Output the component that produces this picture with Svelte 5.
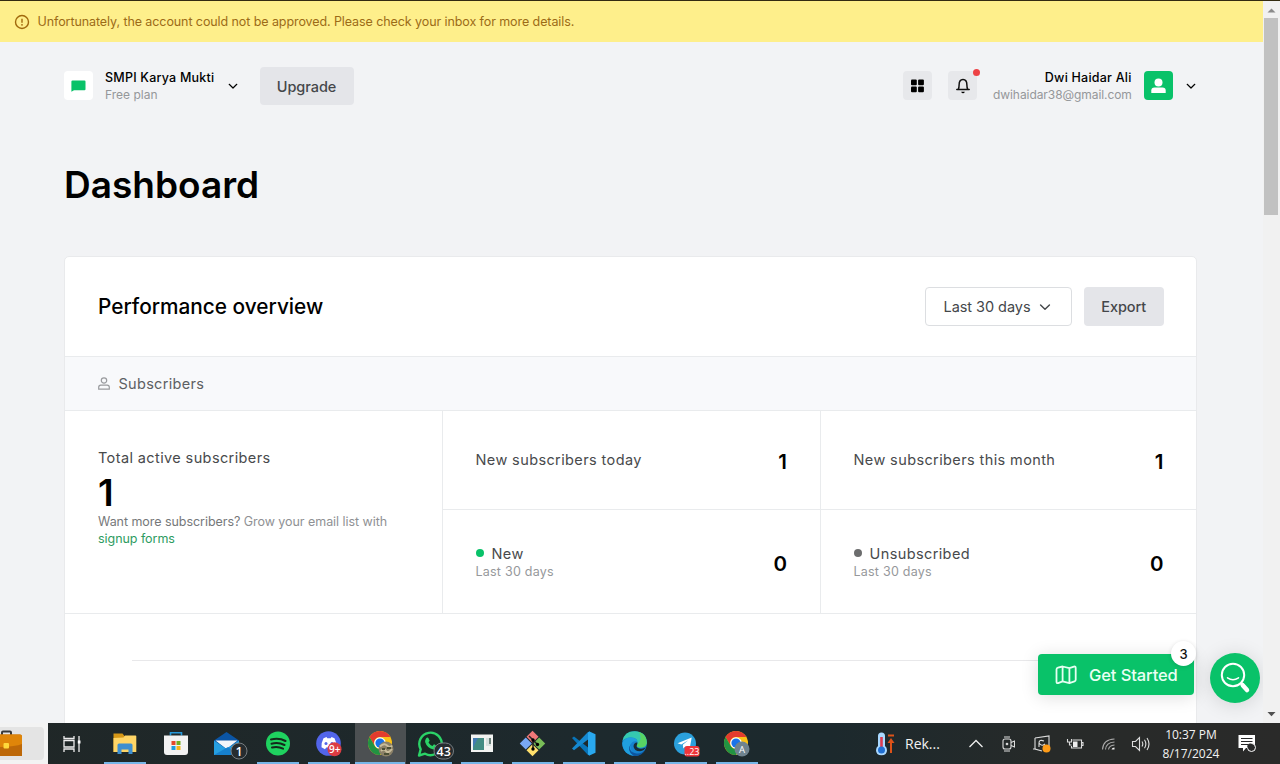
<script>
  const stats = [
    { label: 'New subscribers today', value: 1 },
    { label: 'New subscribers this month', value: 1 },
    { label: 'New', value: 0, dot: 'green', period: 'Last 30 days' },
    { label: 'Unsubscribed', value: 0, dot: 'grey', period: 'Last 30 days' }
  ];
  const apps = [
    { id: 'explorer', open: true },
    { id: 'store' },
    { id: 'mail' },
    { id: 'spotify', open: true },
    { id: 'discord', open: true },
    { id: 'chrome', open: true, active: true },
    { id: 'whatsapp', open: true },
    { id: 'window', open: true },
    { id: 'git', open: true },
    { id: 'vscode', open: true },
    { id: 'edge', open: true },
    { id: 'telegram', open: true },
    { id: 'chrome2', open: true }
  ];
</script>

{#snippet chevron(w)}
  <svg class="chev" width={w} height={w} viewBox="0 0 12 12"><path d="M2.200 4.300l3.800 3.700 3.800-3.700" fill="none" stroke="currentColor" stroke-width="1.200" stroke-linecap="round" stroke-linejoin="round" /></svg>
{/snippet}

{#snippet chromeLogo()}
  <circle cx="20" cy="20" r="12" fill="#fbc116" />
  <path d="M9.600 14A12 12 0 0 1 30.400 14H20a6 6 0 0 0-5.200 9Z" fill="#e33b2e" />
  <path d="M9.600 14A12 12 0 0 0 20 32l5.200-9a6 6 0 0 1-10.400 0Z" fill="#229342" />
  <circle cx="20" cy="20" r="5.800" fill="#fff" />
  <circle cx="20" cy="20" r="4.600" fill="#1a73e8" />
{/snippet}

<div class="screen">
  <div class="viewport">
    <main>
      <div class="banner">
        <svg width="16" height="16" viewBox="0 0 16 16"><circle cx="8" cy="8" r="6.500" fill="none" stroke="#a1690c" stroke-width="1.400" /><path d="M8 4.700v4" stroke="#a1690c" stroke-width="1.400" /><circle cx="8" cy="10.800" r=".9" fill="#a1690c" /></svg>
        <span>Unfortunately, the account could not be approved. Please check your inbox for more details.</span>
      </div>

      <header>
        <div class="logo"><svg width="15" height="12" viewBox="0 0 15 12"><path d="M1.500.5h12q1 0 1 1v7.800q0 1-1 1H3L.4 11.700V1.500q0-1 1.100-1Z" fill="#09c269" /></svg></div>
        <div class="account"><b>SMPI Karya Mukti</b><span>Free plan</span></div>
        <div class="acc-chev">{@render chevron(12)}</div>
        <button class="upgrade">Upgrade</button>
        <div class="spacer"></div>
        <div class="square"><svg width="14" height="14" viewBox="0 0 14 14"><rect x="0" y=".5" width="5.800" height="5.800" rx="1" /><rect x="7.100" y=".5" width="5.800" height="5.800" rx="1" /><rect x="0" y="7.500" width="5.800" height="5.800" rx="1" /><rect x="7.100" y="7.500" width="5.800" height="5.800" rx="1" /></svg></div>
        <div class="square bell">
          <svg width="16" height="16" viewBox="0 0 16 16"><path d="M1.800 11.600h12.400M3.200 11.400c.8-1.200.9-2.200.9-4.500C4.100 4.200 5.300 1.500 8 1.500s3.900 2.700 3.900 5.400c0 2.300.1 3.300.9 4.500" fill="none" stroke="#111" stroke-width="1.500" stroke-linecap="round" stroke-linejoin="round" /><path d="M6.200 13.700h3.600q-.5 1.500-1.800 1.500t-1.800-1.500Z" /></svg>
          <i></i>
        </div>
        <div class="user"><b>Dwi Haidar Ali</b><span>dwihaidar38@gmail.com</span></div>
        <div class="avatar"><svg width="16" height="16" viewBox="0 0 16 16"><circle cx="7.500" cy="4.500" r="4" fill="#fff" /><path d="M.3 15v-2.400q0-3.200 3.200-3.200h8q3.200 0 3.200 3.200V15Z" fill="#fff" /></svg></div>
        <div class="user-chev">{@render chevron(12)}</div>
      </header>

      <h1>Dashboard</h1>

      <section class="card">
        <div class="card-head">
          <h2>Performance overview</h2>
          <button class="select"><span>Last 30 days</span>{@render chevron(14)}</button>
          <button class="export">Export</button>
        </div>
        <div class="strip">
          <svg width="12" height="13" viewBox="0 0 12 13"><circle cx="6" cy="3.500" r="2.700" /><path d="M.7 12.200v-2q0-2.100 2.100-2.100h6.400q2.100 0 2.100 2.100v2Z" /></svg>
          <span>Subscribers</span>
        </div>
        <div class="grid">
          <div class="total">
            <div class="label">Total active subscribers</div>
            <strong>1</strong>
            <p><em>Want more subscribers?</em> Grow your email list with <a href="#forms">signup forms</a></p>
          </div>
          {#each stats as s}
            <div class="stat" class:second={s.period}>
              <div>
                <div class="label">{#if s.dot}<i class={s.dot}></i>{/if}{s.label}</div>
                {#if s.period}<small>{s.period}</small>{/if}
              </div>
              <strong>{s.value}</strong>
            </div>
          {/each}
        </div>
        <div class="chart"></div>
      </section>

      <div class="started">
        <svg width="22" height="20" viewBox="0 0 22 20"><path d="M1.500 4.500Q1.500 3 3 2.600L7.600 1.500l6.800 1.700L19 1.600q1.700-.4 1.700 1.300v11.800q0 1.300-1.200 1.700l-5.100 1.700-6.800-1.700-4.500 1.700q-1.600.4-1.600-1.300ZM7.600 1.500v14.900M14.400 3.200v14.900" fill="none" stroke="#e6fff2" stroke-width="1.800" stroke-linejoin="round" /></svg>
        <span>Get Started</span>
        <i>3</i>
      </div>
      <div class="help"><svg width="50" height="50" viewBox="0 0 50 50"><circle cx="23" cy="22" r="11.200" fill="none" stroke="#fff" stroke-width="2" /><path d="M17.500 24.800q5.500 3.800 11 0" fill="none" stroke="#fff" stroke-width="1.500" stroke-linecap="round" /><path d="M31 30l2 2" stroke="#fff" stroke-width="2.500" /><path d="M32.700 32.200l4.300 4.800" stroke="#fff" stroke-width="4.500" stroke-linecap="round" /></svg></div>
    </main>
    <div class="scrollbar">
      <svg width="17" height="17" viewBox="0 0 17 17"><path d="M4.500 11.500l4-4 4 4Z" fill="#8b8b8b" /></svg>
      <div class="thumb"></div>
      <div class="spacer"></div>
      <svg width="17" height="17" viewBox="0 0 17 17"><path d="M4.500 6h8l-4 4.200Z" fill="#505050" /></svg>
    </div>
  </div>

  <footer>
    <div class="search"><svg width="48" height="41" viewBox="0 0 48 41">
      <path d="M-6 4H40q4 0 4 4V33q0 4-4 4H-6Z" fill="#e4e4e4" />
      <path d="M2 12V9.500Q2 8.500 3 8.500h7q1 0 1 1V12" fill="none" stroke="#383838" stroke-width="2" />
      <path d="M-4 11.500H20q2 0 2 2V33H-4Z" fill="#bd6808" /><path d="M-4 11.500H20q2 0 2 2V21q-7 3-26 3Z" fill="#df8509" /><rect x="3.500" y="20" width="5.500" height="5.500" rx="1" fill="#ffd83b" />
    </svg></div>
    <div class="taskview"><svg width="24" height="24" viewBox="0 0 24 24"><path d="M4 4v2.500h10V4M4 20v-3h10v3M4 8.500h10v6.500H4ZM19 4v16" fill="none" stroke="#eee" stroke-width="1.300" /><path d="M17.800 8.500h2.700v3h-2.700Z" fill="#fff" /></svg></div>
    <div class="apps">
      {#each apps as a}
        <div class="app" class:open={a.open} class:active={a.active}>
          <svg width="42" height="41" viewBox="0 0 42 41">
            {#if a.id === 'explorer'}
              <path d="M9.500 10.500h9l2 2.500H31q1 0 1 1V29H9.500Z" fill="#d69716" /><path d="M9.500 15l10-.5 1.500-2h10.500q.8 0 .8.800V29H9.500Z" fill="#ffd566" /><path d="M13.500 31V22q0-1.500 1.500-1.500h12q1.500 0 1.500 1.500v9h-4v-4.500h-7V31Z" fill="#3d8ed0" />
            {:else if a.id === 'store'}
              <path d="M15.500 12.500V9.700h11v2.800" fill="none" stroke="#2698d9" stroke-width="1.600" /><path d="M9 12.500h24V29q0 3-3 3H12q-3 0-3-3Z" fill="#f2f2f2" /><path d="M16.500 18h4v4h-4Z" fill="#e4482b" /><path d="M21.500 18h4v4h-4Z" fill="#73ad21" /><path d="M16.500 23h4v4h-4Z" fill="#1c9ce0" /><path d="M21.500 23h4v4h-4Z" fill="#f5b51b" />
            {:else if a.id === 'mail'}
              <path d="M8 17.500L20.500 9 33 17.500V31H8Z" fill="#0b55a5" /><path d="M9.500 17.500h22L20.500 26Z" fill="#f2f6fa" /><path d="M8 17.500L20.500 26 33 17.500V32H8Z" fill="#269fe1" /><path d="M8 32l14-8 11 8Z" fill="#1680cd" /><circle cx="33" cy="28" r="8" fill="#262c2f" stroke="#777e82" /><text x="33" y="32.500" font-size="12.500" font-weight="600" text-anchor="middle" fill="#fff">1</text>
            {:else if a.id === 'spotify'}
              <circle cx="21" cy="20.500" r="12" fill="#1fd25f" /><path d="M14 16.500q8-2 14.500 1.500M14.500 20.700q7-1.800 13 1.300M15 24.500q6-1.400 11 1.200" fill="none" stroke="#14281b" stroke-width="2" stroke-linecap="round" />
            {:else if a.id === 'discord'}
              <circle cx="20.500" cy="20.500" r="12.300" fill="#5265ea" /><path d="M15.500 15.200l3-1.200.8 1.200h3.400l.8-1.200 3 1.200q2.300 4.300 2 9l-3.500 2-1.200-1.800h-5.600L17 26.200l-3.500-2q-.3-4.700 2-9Z" fill="#fff" /><circle cx="18" cy="20.500" r="1.500" fill="#5265ea" /><circle cx="24" cy="20.500" r="1.500" fill="#5265ea" /><circle cx="26.500" cy="26.300" r="7" fill="#dc3c43" /><text x="26.700" y="30" font-size="10" font-weight="600" text-anchor="middle" fill="#fff">9+</text>
            {:else if a.id === 'chrome'}
              <g transform="translate(1 0)">{@render chromeLogo()}</g><circle cx="27" cy="26" r="7.500" fill="#8b8067" /><path d="M21 23.500q4-4 7-1t5 0M22 28q3-3 5 0t6-2" fill="none" stroke="#c9bd9c" stroke-width="2" /><path d="M23 26h3m2-1h4M25 31h5" stroke="#4b4f36" stroke-width="2" />
            {:else if a.id === 'whatsapp'}
              <path d="M9 32.500l1.700-6.200a11.200 11.200 0 1 1 4.400 4.400Z" fill="#172a23" stroke="#2bd367" stroke-width="2.400" stroke-linejoin="round" /><path d="M16 15.500q1.500-1.800 2.500-.2l1.200 2.500-1.200 1.700q1.300 2.300 3.900 3.500l1.600-1.700 3.200 1.600q.2 3.700-3.700 3.700-6.500-1.500-8.400-7.600-.2-1.900.9-3.500Z" fill="#2bd367" /><rect x="24" y="20" width="19.500" height="16" rx="8" fill="#262c2f" stroke="#777e82" /><text x="33.700" y="32.500" font-size="12.500" font-weight="600" text-anchor="middle" fill="#fff">43</text>
            {:else if a.id === 'window'}
              <path d="M10 11.500h22v17.500H10Z" fill="#f2f3f1" /><path d="M12 15h11v12H12Z" fill="#438c83" /><path d="M12 15h5l-5 10Z" fill="#437bb2" /><path d="M25 15h5v8h-5Z" fill="#d7e1df" /><path d="M28 15h2v6h-2Z" fill="#6a817a" />
            {:else if a.id === 'git'}
              <g transform="rotate(45 20.500 20.500)"><path d="M11.500 11.500h8.500v8.500h-8.500Z" fill="#f17879" /><path d="M21 11.500h8.500v8.500H21Z" fill="#79bd58" /><path d="M11.500 21h8.500v8.500h-8.500Z" fill="#78a8f5" /><path d="M21 21h8.500v8.500H21Z" fill="#ffe06c" /></g><path d="M17 13l4 4v10M21 17l5 5" stroke="#252525" stroke-width="1.500" fill="none" /><circle cx="21" cy="17" r="1.700" /><circle cx="25.500" cy="21.500" r="1.700" /><circle cx="21" cy="26" r="1.700" />
            {:else if a.id === 'vscode'}
              <path d="M9 15l2-1.500L27 26v6.500l-2-.5Z" fill="#0874b9" /><path d="M9 25.500l2 1.700L27 15V8.500l-2 .6Z" fill="#1689d1" /><path d="M26.500 8.500l6 2.700v18.600l-6 2.700-1.500-1V9.500Z" fill="#29a8ef" />
            {:else if a.id === 'edge'}
              <circle cx="20.500" cy="20.500" r="12.300" fill="#1683cf" /><path d="M8.600 18Q10 8 21 8.200 33 9 32.800 20q-1 5-7.500 4.500-3.500-.8-2-3 1.500-7-6.300-7Q11 14.500 8.600 18Z" fill="#35c9b0" /><path d="M25 9Q33 12 32.800 20q-1 5-7.500 4.500-3.500-.8-2-3Q29 17 25 9Z" fill="#58d463" /><path d="M8.300 20q2-5.500 8.700-5.500 5.500.3 6.500 4-5.500-1.500-7 3.500-.5 6 4.500 10.500Q9 32 8.300 20Z" fill="#209fdf" /><path d="M17 20.500q-3.500 8.500 5.500 10 5 .8 9-4-4 7.500-12 6.200Q12 28 17 20.500Z" fill="#0d559f" /><path d="M23.500 19.500q-.5 3-1 3.500.5 2.700 4.500 2.700 4-.1 5-2.200-1.500 4.500-6 4.700-6 0-6.500-5 .5-4 4-3.700Z" fill="#192c35" />
            {:else if a.id === 'telegram'}
              <circle cx="20" cy="20.500" r="11" fill="#2ba0dc" /><path d="M12.500 20.300L26.700 14.500l-2.200 12-4.200-3-2 2-.5-3.700 5.500-4.500-7 4.200Z" fill="#fff" /><rect x="19.500" y="23" width="15" height="10.500" rx="2.500" fill="#ef3539" /><text x="27" y="31.700" font-size="9" text-anchor="middle" fill="#fff">..23</text>
            {:else}
              {@render chromeLogo()}<circle cx="26" cy="26" r="7.500" fill="#6f838f" /><text x="26" y="29.500" font-size="9.500" text-anchor="middle" fill="#fff">A</text>
            {/if}
          </svg>
        </div>
      {/each}
    </div>
    <div class="spacer"></div>
    <div class="weather"><svg width="22" height="26" viewBox="0 0 22 26"><path d="M3 5q0-3.500 3.500-3.500T10 5v10q2 1.500 2 4.200 0 5-5.500 5T1 19.200Q1 16.500 3 15Z" fill="#a9d8ff" /><path d="M6.500 6v12" stroke="#dd3b4f" stroke-width="2.600" /><circle cx="6.500" cy="19" r="3.500" fill="#206fd2" /><path d="M13 4.500h6M16 22V9" stroke="#dc5219" stroke-width="2" /><path d="M12.500 12L16 7l3.500 5Z" fill="#dc5219" /></svg><span>Rek...</span></div>
    <div class="tray">
      <svg width="16" height="20" viewBox="0 0 16 20"><path d="M1.500 13L8 6.500l6.500 6.500" fill="none" stroke="#eee" stroke-width="1.300" /></svg>
      <svg width="16" height="20" viewBox="0 0 16 20"><rect x="4" y="5" width="8" height="10" rx="2" /><path d="M12 8.500l3.500-1.500v6L12 11.500M5 3h6M5 17h6" /><circle cx="8" cy="10" r=".8" /></svg>
      <svg width="20" height="20" viewBox="0 0 20 20"><path d="M4 4l14-2v10M4 4v11l7 2M2 15h3M13 7q-5-2-5 2v4M8 9q3 4 6 1" /><circle cx="15.500" cy="14.500" r="4" fill="#ff9c18" stroke="none" /></svg>
      <svg width="18" height="20" viewBox="0 0 18 20"><path d="M6.500 6h9v8h-10v-2M15.500 8.500h1.500v3h-1.500M1.500 5v3h4V5M3.500 8v3h2" /><path d="M7 7.500h4.500v5.500H7Z" fill="#eee" stroke="none" /></svg>
      <svg width="16" height="20" viewBox="0 0 16 20"><path d="M2.500 15.500Q3 5.500 14.500 5M5.500 15.500Q6 8.500 14.500 8M8.500 15.500q.5-4 6-4.500" stroke="#aaa" /><path d="M11.500 15.500q.5-2 3-2v2Z" fill="#eee" stroke="none" /></svg>
      <svg width="19" height="20" viewBox="0 0 19 20"><path d="M1.500 7.500h3l4-4v13l-4-4h-3ZM11 7.500q1.600 2.500 0 5M13.500 5.700q2.700 4.300 0 8.600M16 4q4 6 0 12" /></svg>
    </div>
    <div class="clock"><span>10:37 PM</span><span>8/17/2024</span></div>
    <div class="notes"><svg width="18" height="19" viewBox="0 0 18 19"><path d="M.5 1H17v13H8l-3 3.500V14H.5Z" fill="#fff" /><path d="M3 4.500h11.500M3 7.500h11.500M3 10.500h7" stroke="#282828" stroke-width="1.200" /><circle cx="13.500" cy="13.500" r="4" fill="#292929" stroke="#fff" /><circle cx="12.200" cy="12.200" r="2.800" fill="#292929" /></svg></div>
  </footer>
</div>

<style>
  :global(body) { margin: 0; overflow: hidden; }
  * { box-sizing: border-box; }
  .screen { width: 1280px; height: 764px; display: flex; flex-direction: column; font-family: Inter, sans-serif; color: #000; overflow: hidden; }
  .viewport { height: 723px; display: flex; border-top: 1px solid #332b10; flex: none; }
  main { width: 1263px; height: 722px; background: #f2f3f5; overflow: hidden; position: relative; }
  .spacer { flex: 1; }
  .chev { display: block; }
  .banner { height: 41px; background: #feef8b; display: flex; align-items: center; padding-left: 14px; gap: 7.500px; font-size: 12.500px; color: #9c6b17; letter-spacing: -.085px; white-space: nowrap; }
  header { height: 88px; display: flex; align-items: center; padding: 0 66px 0 64px; }
  .logo { width: 29px; height: 29px; background: #fff; border-radius: 4px; display: grid; place-items: center; margin-bottom: 1px; }
  .account, .user { display: flex; flex-direction: column; font-size: 12.500px; line-height: 17px; white-space: nowrap; }
  .account { width: 110px; margin-left: 12px; }
  .account b, .user b { font-weight: 500; letter-spacing: .22px; }
  .account span, .user span { font-size: 12px; color: #95979a; letter-spacing: 0; }
  .user span { letter-spacing: -.07px; }
  .acc-chev { margin: 0 20.500px 0 12px; }
  button { font-family: inherit; border: 0; padding: 0; font-size: 14.500px; color: #44474a; border-radius: 4px; letter-spacing: -.05px; }
  .upgrade { width: 94px; height: 38px; background: #e4e5e9; font-weight: 500; }
  .square { width: 29px; height: 29px; border-radius: 4px; background: #e7e8eb; display: grid; place-items: center; margin-right: 16px; margin-bottom: 1px; position: relative; }
  .bell i { position: absolute; right: -3px; top: -2px; width: 7px; height: 7px; border-radius: 50%; background: #ed4245; }
  .user { text-align: right; width: 139px; padding-right: .5px; }
  .avatar { width: 29px; height: 29px; margin: 0 12px 1px; border-radius: 4px; background: #09c269; display: grid; place-items: center; }
  h1 { margin: 31px 0 0 64px; font-size: 37px; line-height: 48px; font-weight: 600; letter-spacing: 0; }
  .card { width: 1133px; height: 520px; margin: 47px 0 0 64px; border: 1px solid #e9eaec; border-radius: 5px; background: #fff; }
  .card-head { height: 100px; display: flex; align-items: center; padding: 0 32.500px 0 33px; border-bottom: 1px solid #e9ebed; }
  h2 { margin: 0; font-size: 20.800px; font-weight: 500; flex: 1; line-height: 26px; }
  .select { width: 147.500px; height: 39px; border: 1px solid #dcdee1; background: #fff; display: flex; align-items: center; justify-content: center; gap: 7.500px; margin-right: 12px; padding-right: 1px; }
  .export { width: 79.500px; height: 39px; background: #e4e5e9; font-weight: 500; }
  .strip { height: 54px; display: flex; align-items: center; padding-left: 33px; gap: 8.500px; background: #f8f9fb; color: #5d6063; font-size: 14.500px; letter-spacing: .3px; border-bottom: 1px solid #e9ebed; }
  .strip svg { fill: none; stroke: #999b9e; stroke-width: 1.200; }
  .grid { height: 203px; display: grid; grid-template-columns: 378px 378px 1fr; grid-template-rows: 99px 104px; border-bottom: 1px solid #e9ebed; }
  .total { grid-row: 1 / 3; padding: 37px 33px; border-right: 1px solid #e9ebed; }
  .label { font-size: 14.500px; line-height: 20px; letter-spacing: .39px; color: #484a4c; white-space: nowrap; display: flex; align-items: center; }
  .total strong { display: block; font-size: 37px; line-height: 50px; height: 46px; font-weight: 600; }
  p { margin: 0; font-size: 12.500px; line-height: 16.500px; color: #8f9194; letter-spacing: -.05px; }
  em { font-style: normal; color: #76787a; }
  a { color: #2d9b61; text-decoration: none; display: block; }
  .stat { display: flex; align-items: center; justify-content: space-between; padding: 0 33px 0 32.500px; border-right: 1px solid #e9ebed; border-bottom: 1px solid #e9ebed; }
  .stat:nth-child(odd) { border-right: 0; padding-right: 32.500px; }
  .second { border-bottom: 0; padding-bottom: 1px; }
  .stat strong { font-size: 20.500px; line-height: 26px; font-weight: 600; padding-top: 4px; }
  .label i { width: 8px; height: 8px; border-radius: 50%; margin: 0 8px 1px 0; background: #09c269; }
  .label i.grey { background: #6c6d6e; }
  small { display: block; font-size: 12.500px; line-height: 16px; color: #96989b; letter-spacing: .23px; }
  .chart { margin: 46px 67px 0; border-top: 1px solid #e8e8ea; }
  .started { position: absolute; left: 1038px; top: 653px; width: 156px; height: 41px; background: #09c269; color: #e9fff3; border-radius: 4px; display: flex; align-items: center; padding-left: 17px; gap: 12px; font-size: 16.500px; font-weight: 500; letter-spacing: -.1px; box-shadow: 0 2px 18px #0002; white-space: nowrap; }
  .started i { position: absolute; right: -2px; top: -13px; width: 25px; height: 25px; border-radius: 50%; background: #fff; color: #111; font-style: normal; font-size: 13px; display: grid; place-items: center; box-shadow: 0 1px 4px #0002; }
  .help { position: absolute; left: 1210px; top: 652px; width: 50px; height: 50px; border-radius: 50%; background: #09c269; box-shadow: 0 2px 20px #0002; }
  .help svg { display: block; }
  .scrollbar { width: 17px; height: 722px; background: #f1f1f1; display: flex; flex-direction: column; }
  .scrollbar svg { display: block; }
  .thumb { width: 14px; height: 197px; margin-left: 1px; background: #c1c1c1; }
  footer { height: 41px; display: flex; align-items: stretch; background: linear-gradient(90deg, #202727, #1d292d 45%, #1c292d 65%, #272a29 82%, #2a2a29); color: #f3f3f3; font-family: "Open Sans", sans-serif; }
  footer svg { display: block; flex: none; }
  .search { width: 48px; background: #f3f3f3; overflow: hidden; }
  .taskview { width: 52px; display: flex; align-items: center; padding-left: 12px; }
  .apps { display: flex; }
  .app { width: 51px; position: relative; padding-left: 4px; }
  .app svg { overflow: visible; }
  .active { background: #4c5052; }
  .open::after { content: ""; position: absolute; left: 4px; right: 5px; bottom: 0; height: 2px; background: #77b6e8; }
  .active::after { left: 0; right: 1px; }
  .weather { display: flex; align-items: center; gap: 8px; font-size: 14px; width: 92px; margin: 0; }
  .tray { display: flex; align-items: center; justify-content: space-between; width: 182px; margin-left: 1px; margin-right: -1px; }
  .tray svg { fill: none; stroke: #ddd; stroke-width: 1.100; }
  .clock { width: 84px; display: flex; flex-direction: column; align-items: center; justify-content: center; font-size: 12px; line-height: 19px; white-space: nowrap; }
  .notes { width: 47px; display: flex; align-items: center; padding-left: 5px; }
</style>
